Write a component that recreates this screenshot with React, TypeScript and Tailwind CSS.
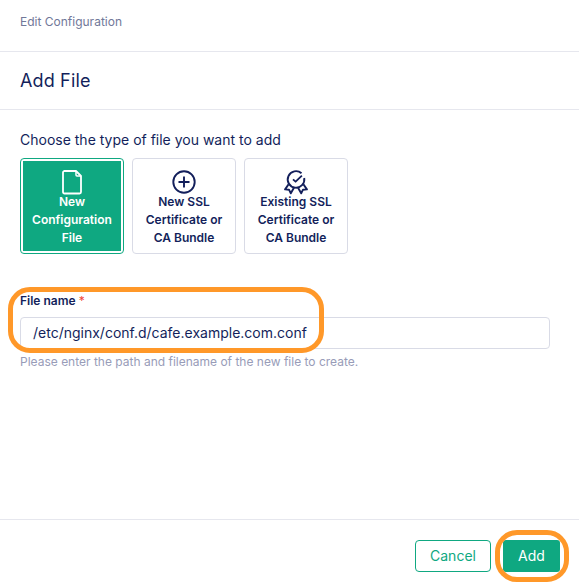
import type { ReactNode } from "react";

function FileIcon() {
  return (
    <svg width="24" height="26" viewBox="0 0 24 26" fill="none" stroke="currentColor" strokeWidth="1.800" strokeLinejoin="round">
      <path d="M4 2h12l5 5v16a1.500 1.500 0 0 1-1.500 1.500h-15A1.500 1.500 0 0 1 3 23V3.500A1.500 1.500 0 0 1 4 2z" />
      <path d="M16 2v4a1 1 0 0 0 1 1h4" strokeWidth="1.500" />
    </svg>
  );
}

function PlusIcon() {
  return (
    <svg width="24" height="26" viewBox="0 0 24 26" fill="none" stroke="currentColor" strokeWidth="1.900">
      <circle cx="12" cy="13" r="10.700" />
      <path d="M12 7.500v11M6.500 13h11" />
    </svg>
  );
}

function CertificateIcon() {
  return (
    <svg width="24" height="26" viewBox="0 0 24 26" fill="none" stroke="currentColor" strokeWidth="1.900" strokeLinejoin="round">
      <path d="M17.500 4.200A8.300 8.300 0 1 0 20.200 9" />
      <path d="M9 10.300l2.600 2.400 6.300-6" strokeWidth="1.800" />
      <path d="M4.600 15.200L1.100 20.400l3.900.3 1.800 3.600 3.600-6.200" />
      <path d="M19.400 15.200l3.500 5.200-3.900.3-1.800 3.600-3.600-6.200" />
    </svg>
  );
}

function TypeCard({ icon, lines, selected = false }: { icon: ReactNode; lines: string[]; selected?: boolean }) {
  return (
    <button
      className={
        selected
          ? "h-24 w-[104px] rounded border border-[#0fa881] bg-white p-[2px] text-white"
          : "h-24 w-[104px] rounded border border-[#d9dbe6] bg-white p-[2px] text-[#131f5b]"
      }
    >
      <span className={selected ? "flex h-full flex-col items-center bg-[#0fa881] pt-2" : "flex h-full flex-col items-center pt-2"}>
        <span className="h-6">{icon}</span>
        {lines.map((line) => (
          <span key={line} className="text-xs leading-[18px] font-semibold whitespace-nowrap">
            {line}
          </span>
        ))}
      </span>
    </button>
  );
}

export default function App() {
  return (
    <div className="flex h-[585px] w-[579px] flex-col overflow-hidden bg-white font-['Inter',sans-serif] text-[#131f5b]">
      <nav className="flex h-[52px] shrink-0 items-start border-b border-[#e6e7ee] px-5 pt-[13px] text-xs leading-[18px] text-[#717899]">
        Edit Configuration
      </nav>
      <header className="flex h-[58px] shrink-0 items-center border-b border-[#e6e7ee] px-5">
        <h1 className="text-lg leading-6 tracking-[0.15px]">Add File</h1>
      </header>
      <main className="flex-1 px-5 pt-5">
        <p className="text-sm leading-5">Choose the type of file you want to add</p>
        <div className="mt-2 flex gap-2">
          <TypeCard selected icon={<FileIcon />} lines={["New", "Configuration", "File"]} />
          <TypeCard icon={<PlusIcon />} lines={["New SSL", "Certificate or", "CA Bundle"]} />
          <TypeCard icon={<CertificateIcon />} lines={["Existing SSL", "Certificate or", "CA Bundle"]} />
        </div>
        <div className="relative mt-[37px]">
          <label className="block h-[26px] pt-px text-xs leading-[18px] font-semibold">
            File name <span className="font-normal text-[#f0443a]">*</span>
          </label>
          <div className="flex h-8 w-[530px] items-center rounded border border-[#d9dbe6] px-3 text-sm">
            /etc/nginx/conf.d/cafe.example.com.conf
          </div>
          <p className="mt-1 text-xs leading-[18px] text-[#989cb8]">
            Please enter the path and filename of the new file to create.
          </p>
          <div className="pointer-events-none absolute -top-1 -left-3 h-[66px] w-[316px] rounded-[22px] border-5 border-[#ff9829]" />
        </div>
      </main>
      <footer className="flex h-[66px] shrink-0 justify-end gap-3 border-t border-[#e6e7ee] pt-5 pr-[19px] text-sm">
        <button className="h-8 w-[76px] rounded border border-[#0fa881] text-[#0fa881]">Cancel</button>
        <div className="relative h-8 w-[57px]">
          <button className="h-8 w-full rounded-[3px] bg-[#0fa881] text-white">Add</button>
          <div className="pointer-events-none absolute -top-[10px] -left-2 h-[52px] w-[74px] rounded-[22px] border-5 border-[#ff9829]" />
        </div>
      </footer>
    </div>
  );
}
